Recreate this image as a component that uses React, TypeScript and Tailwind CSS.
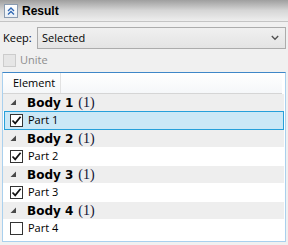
const ui = { fontFamily: '"Open Sans", "Liberation Sans", Arial, sans-serif' };
const bold = { fontFamily: '"DejaVu Sans", Verdana, sans-serif' };

const groups = [
  { body: 'Body 1', part: 'Part 1', checked: true, selected: true },
  { body: 'Body 2', part: 'Part 2', checked: true, selected: false },
  { body: 'Body 3', part: 'Part 3', checked: true, selected: false },
  { body: 'Body 4', part: 'Part 4', checked: false, selected: false },
];

function Expander() {
  return (
    <svg width="7" height="7" viewBox="0 0 7 7" className="shrink-0">
      <polygon points="6,0.5 6,6 0.5,6" fill="#4a4a4a" />
    </svg>
  );
}

function CheckBox({ checked }: { checked: boolean }) {
  return (
    <div className="w-[13px] h-[13px] border border-[#333333] bg-white flex items-center justify-center shrink-0">
      {checked && (
        <svg width="11" height="11" viewBox="0 0 11 11">
          <path d="M1.5 5.5 L4.2 8.4 L9.6 1.8" fill="none" stroke="#111" strokeWidth="1.7" />
        </svg>
      )}
    </div>
  );
}

export default function App() {
  return (
    <div className="w-[288px] h-[245px] bg-[#f0f0f0] flex flex-col overflow-hidden" style={ui}>
      {/* section header */}
      <div className="h-[22px] shrink-0 flex items-center gap-[4px] pl-[4px] bg-gradient-to-b from-[#9f9f9f] via-[#d6d6d6] to-[#eeeeee] border-b border-[#c4c4c4]">
        <div className="w-[14px] h-[14px] border border-[#8a9bb0] bg-gradient-to-b from-white to-[#e8eef5] flex items-center justify-center">
          <svg width="10" height="10" viewBox="0 0 10 10">
            <path d="M2 5 L5 2 L8 5 M2 8.5 L5 5.5 L8 8.5" fill="none" stroke="#2f67b4" strokeWidth="1.3" />
          </svg>
        </div>
        <span
          className="text-[12px] font-bold text-black leading-none"
          style={{ fontFamily: '"Liberation Sans", Arial, sans-serif' }}
        >
          Result
        </span>
      </div>

      {/* keep */}
      <div className="mt-[5px] h-[22px] flex items-center pl-[3px] pr-[2px] shrink-0">
        <span className="w-[34px] text-[11px] text-black">Keep:</span>
        <div className="flex-1 h-[22px] border border-[#acacac] bg-gradient-to-b from-[#f0f0f0] to-[#e4e4e4] flex items-center justify-between pl-[4px] pr-[6px]">
          <span className="text-[11px] text-black">Selected</span>
          <svg width="8" height="6" viewBox="0 0 8 6">
            <path d="M0.8 1 L4 4.3 L7.2 1" fill="none" stroke="#505050" strokeWidth="1.3" />
          </svg>
        </div>
      </div>

      {/* unite */}
      <div className="mt-[4px] h-[15px] flex items-center gap-[4px] pl-[3px] shrink-0">
        <div className="w-[13px] h-[13px] border border-[#cccccc] bg-[#e6e6e6]" />
        <span className="text-[11px] text-[#8d8d8d]">Unite</span>
      </div>

      {/* tree */}
      <div className="mt-[4px] mx-[2px] h-[170px] bg-white border border-[#a9d0ee] border-t-[#3f87c8] flex flex-col overflow-hidden">
        <div className="h-[21px] shrink-0 flex bg-gradient-to-b from-white to-[#f5f7f9] border-b border-[#d5d5d5] mr-[3px]">
          <div className="w-[58px] border-r border-[#e2e2e2] flex items-center pl-[10px]">
            <span className="text-[11px] text-black">Element</span>
          </div>
        </div>
        {groups.map((g) => (
          <div key={g.body} className="flex flex-col mr-[1px]">
            <div className="h-[17px] bg-[#eeeeee] flex items-center pl-[7px]">
              <Expander />
              <span className="ml-[10px] text-[12px] font-bold text-black leading-none" style={bold}>
                {g.body}
              </span>
              <span
                className="ml-[5px] text-[14px] text-[#111133] leading-none"
                style={{ fontFamily: '"Liberation Serif", serif' }}
              >
                (1)
              </span>
            </div>
            <div
              className={`h-[19px] flex items-center gap-[5px] ${
                g.selected ? 'ml-[1px] pl-[5px] bg-[#cbe8f6] border border-[#26a0da]' : 'pl-[7px]'
              }`}
            >
              <CheckBox checked={g.checked} />
              <span className="text-[11px] text-black">{g.part}</span>
            </div>
          </div>
        ))}
      </div>
    </div>
  );
}
